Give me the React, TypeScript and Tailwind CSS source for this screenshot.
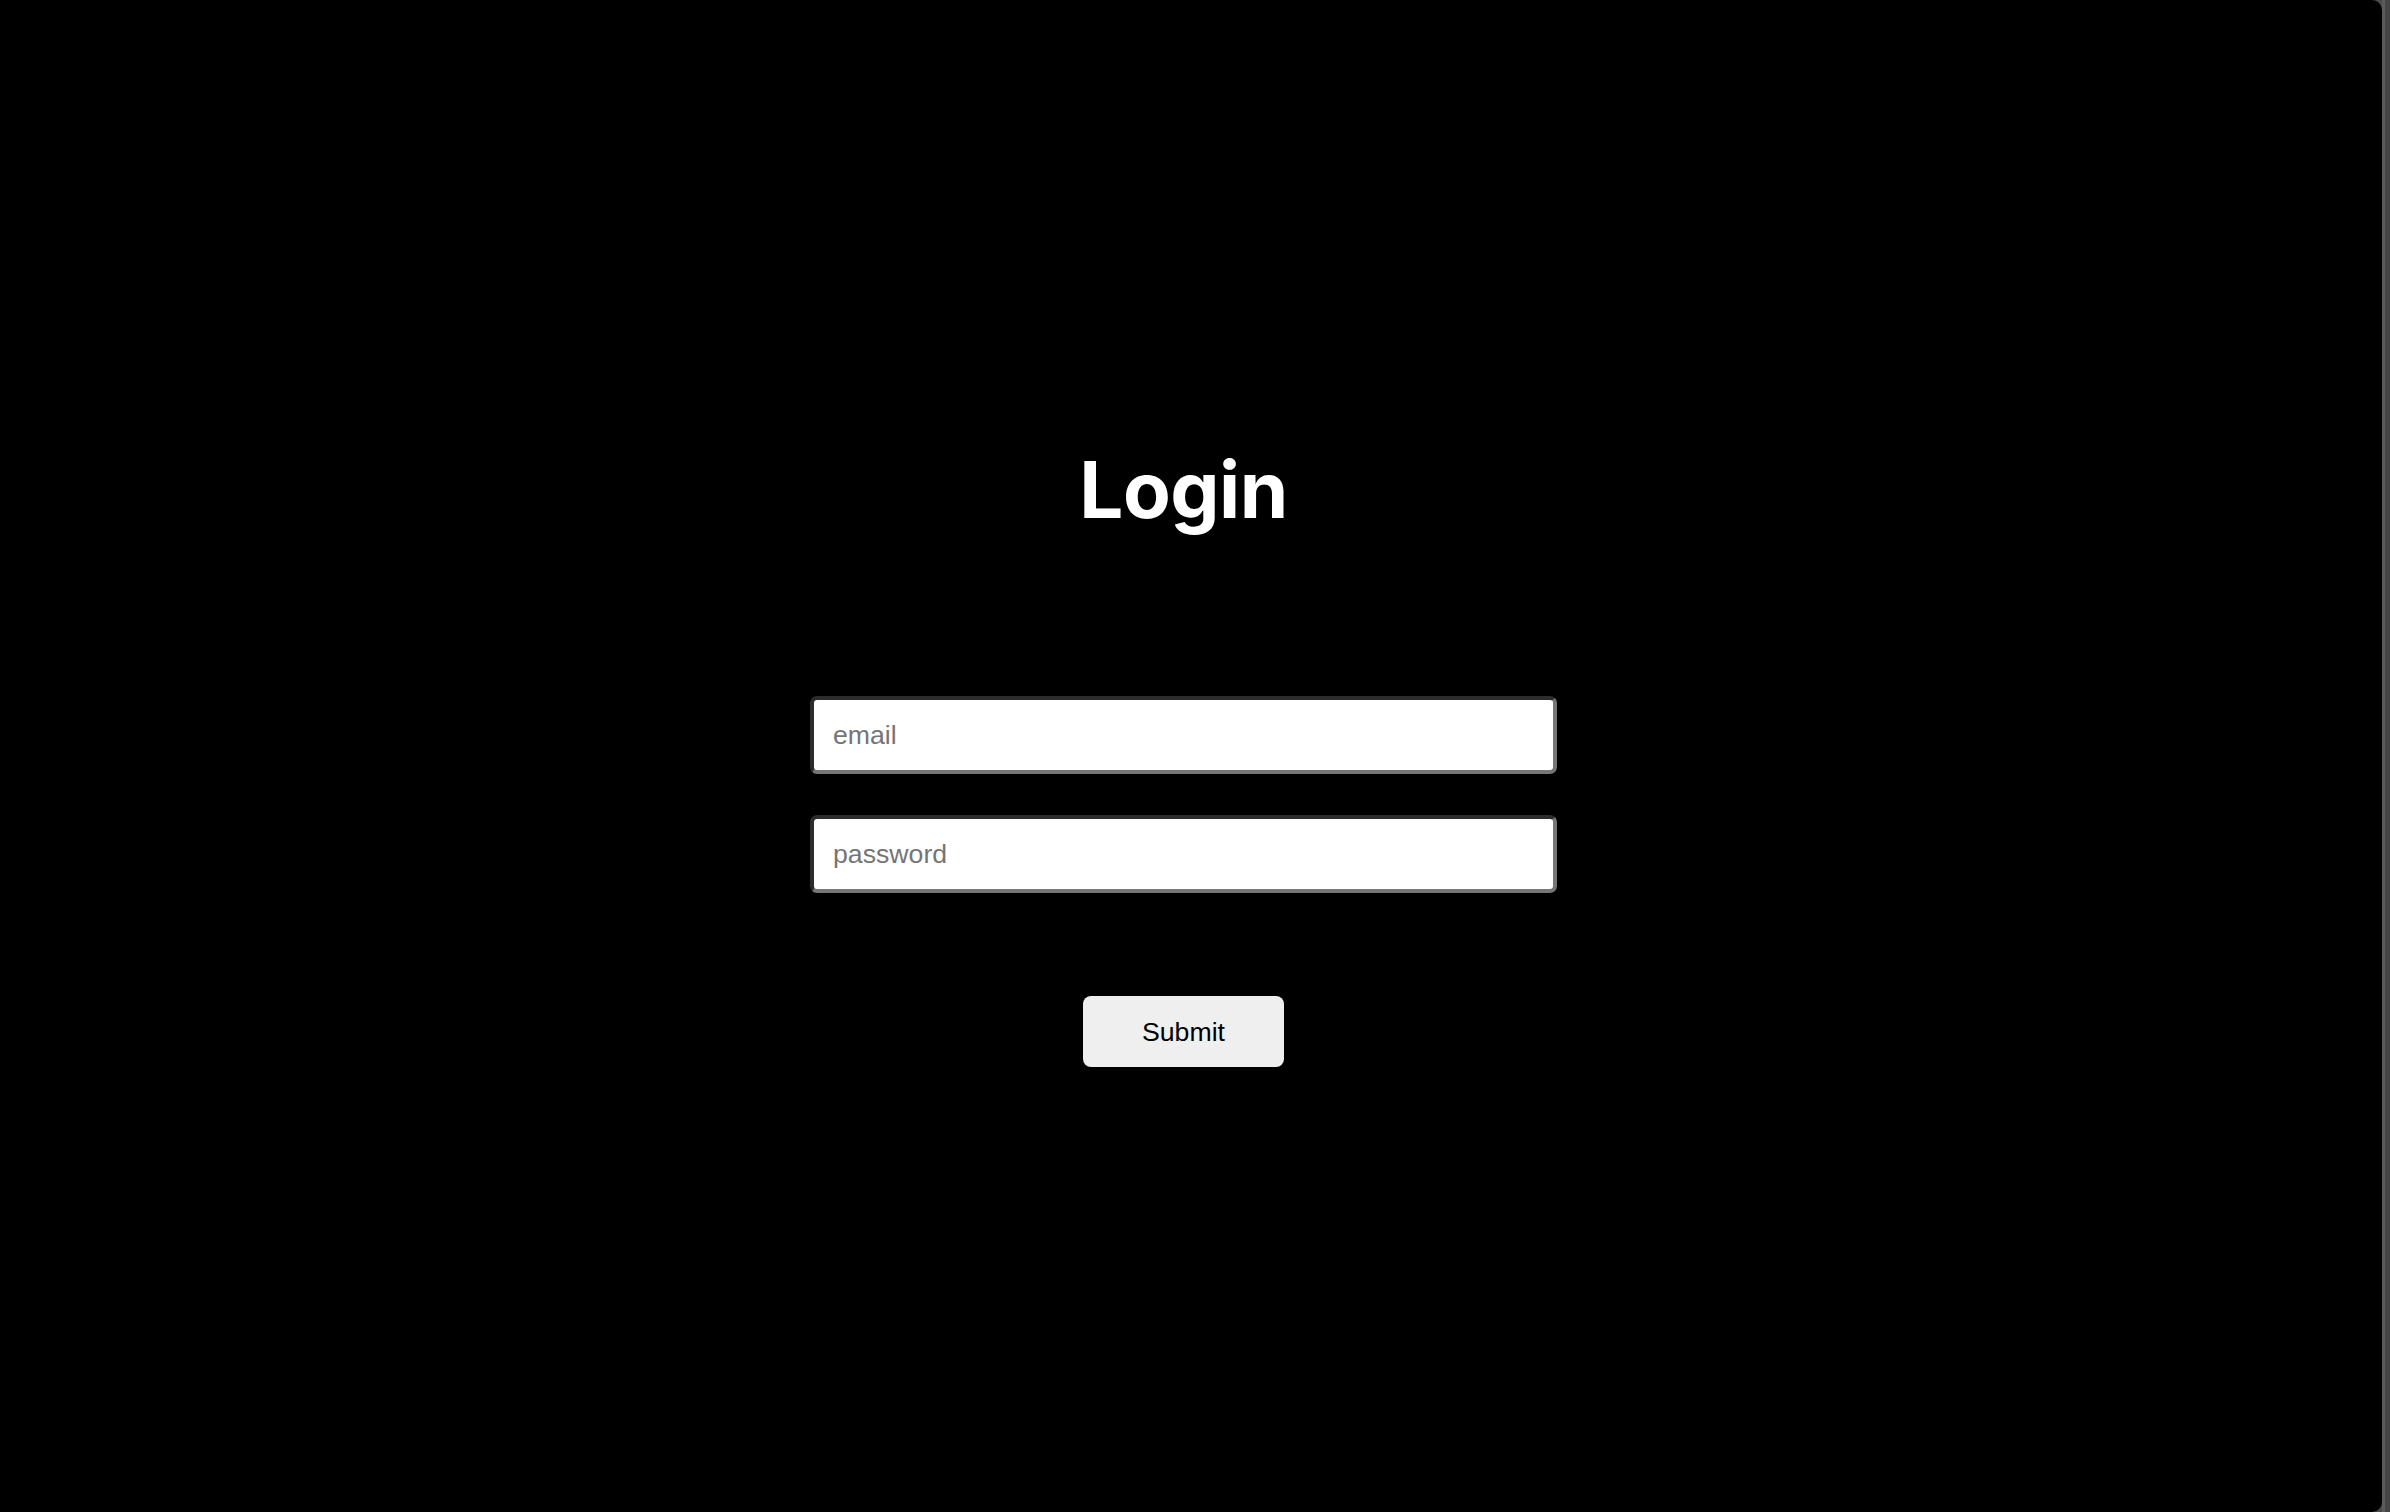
import React, { useState } from 'react';

const App: React.FC = () => {
  const [email, setEmail] = useState('');
  const [password, setPassword] = useState('');

  const inputClass =
    'w-[747px] h-[78px] bg-white rounded-[7px] border-[4px] border-t-[#2c2c2c] border-l-[#2c2c2c] border-b-[#767676] border-r-[#767676] px-[19px] text-[26.67px] text-black placeholder:text-[#757575] outline-none';

  return (
    <div className="flex w-full h-screen bg-[#4a4a4a]">
      {/* Page */}
      <div className="flex-1 bg-black rounded-r-[10px] flex flex-col items-center justify-center pt-[6px] pr-[15px]">
        <h1
          className="text-white text-[78px] font-bold leading-none tracking-[-0.5px]"
          style={{ fontFamily: 'Inter, "Noto Sans", sans-serif' }}
        >
          Login
        </h1>

        <form
          className="flex flex-col items-center mt-[167px]"
          style={{ fontFamily: '"Liberation Sans", Arial, sans-serif' }}
          onSubmit={(e) => e.preventDefault()}
        >
          <input
            type="text"
            placeholder="email"
            value={email}
            onChange={(e) => setEmail(e.target.value)}
            className={inputClass}
          />
          <input
            type="password"
            placeholder="password"
            value={password}
            onChange={(e) => setPassword(e.target.value)}
            className={`${inputClass} mt-[41px]`}
          />
          <button
            type="submit"
            className="mt-[103px] w-[201px] h-[71px] bg-[#efefef] rounded-[8px] text-[26.67px] text-black"
          >
            Submit
          </button>
        </form>
      </div>

      {/* window edge */}
      <div className="w-[3px] bg-[#5a5a5a]" />
      <div className="w-[5px] bg-[#454545]" />
    </div>
  );
};

export default App;
